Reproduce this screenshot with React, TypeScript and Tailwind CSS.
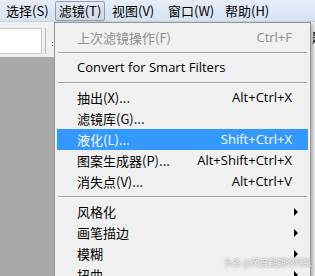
import React from "react";

const CJK = "font-['Microsoft_YaHei','Noto_Sans_CJK_SC',sans-serif]";

type Item =
  | { sep: true }
  | { label: string; key?: string; disabled?: boolean; active?: boolean; sub?: boolean; latin?: boolean };

const ITEMS: Item[] = [
  { label: "上次滤镜操作(F)", key: "Ctrl+F", disabled: true },
  { sep: true },
  { label: "Convert for Smart Filters", latin: true },
  { sep: true },
  { label: "抽出(X)...", key: "Alt+Ctrl+X" },
  { label: "滤镜库(G)...", key: "" },
  { label: "液化(L)...", key: "Shift+Ctrl+X", active: true },
  { label: "图案生成器(P)...", key: "Alt+Shift+Ctrl+X" },
  { label: "消失点(V)...", key: "Alt+Ctrl+V" },
  { sep: true },
  { label: "风格化", sub: true },
  { label: "画笔描边", sub: true },
  { label: "模糊", sub: true },
  { label: "扭曲", sub: true },
];

function Arrow() {
  return (
    <svg width="5" height="8" viewBox="0 0 5 8" className="shrink-0">
      <path d="M0 0 L4 4 L0 8 Z" fill="#000" />
    </svg>
  );
}

export default function App() {
  return (
    <div className={`relative w-[315px] h-[276px] overflow-hidden bg-[#a9a9a9] text-[13px] text-black ${CJK}`}>
      {/* menu bar */}
      <div className="h-[22px] flex items-center bg-gradient-to-b from-[#e6edf7] to-[#d6e1f1] border-b border-[#c5d2e4] whitespace-nowrap">
        <div className="w-[55px] pl-[6px] leading-none">选择(S)</div>
        <div className="w-[50px] h-[20px] flex items-center justify-center leading-none border border-[#8e9cb0] rounded-[2px] bg-gradient-to-b from-[#e4e9f1] to-[#d0d8e4]">
          滤镜(T)
        </div>
        <div className="ml-[7px] w-[56px] leading-none">视图(V)</div>
        <div className="w-[57px] leading-none">窗口(W)</div>
        <div className="leading-none">帮助(H)</div>
      </div>

      {/* toolbar strip */}
      <div className="h-[35px] bg-[#f0f0f0] flex items-start pt-[6px]">
        <div className="w-[42px] h-[26px] bg-white border-y border-r border-[#c8c8c8]" />
        <div className="w-px h-[26px] bg-[#b8b8b8] ml-[3px]" />
        <div className="ml-[6px] mt-[14px] flex flex-col gap-[2px]">
          <div className="w-[1px] h-[1px] bg-[#555]" />
          <div className="w-[1px] h-[1px] bg-[#555]" />
        </div>
      </div>

      {/* right edge background */}
      <div className="absolute left-[310px] top-[22px] w-[5px] h-[254px] bg-[#ececec] border-l border-[#9a9a9a] overflow-hidden">
        <div className="absolute left-[1px] top-[8px] text-[13px] leading-none">題</div>
      </div>

      {/* dropdown */}
      <div className="absolute left-[54px] top-[22px] w-[257px] h-[270px] bg-[#f0f0f0] border border-[#979797] shadow-[2px_2px_3px_rgba(0,0,0,0.25)] pt-[4px] px-[2px]">
        {ITEMS.map((it, i) =>
          "sep" in it ? (
            <div key={i} className="h-[9px] flex items-center px-[1px]">
              <div className="w-full h-[2px] border-t border-[#a0a0a0] border-b border-b-white" />
            </div>
          ) : (
            <div
              key={i}
              className={`h-[21px] flex items-center pl-[20px] pr-[16px] ${
                it.active ? "bg-[#3399ff] text-white" : it.disabled ? "text-[#8d8d8d]" : ""
              }`}
            >
              <span
                className={`flex-1 whitespace-nowrap ${
                  it.latin ? "font-['Segoe_UI','Open_Sans',sans-serif] text-[13px]" : ""
                }`}
              >
                {it.label}
              </span>
              {it.key ? (
                <span className="font-['Segoe_UI','Open_Sans',sans-serif] text-[13px] whitespace-nowrap">{it.key}</span>
              ) : null}
              {it.sub ? (
                <span className="mr-[-7px]">
                  <Arrow />
                </span>
              ) : null}
            </div>
          )
        )}
      </div>

      {/* watermark */}
      <div className="absolute left-[224px] top-[258px] text-[9px] tracking-[-0.4px] leading-none text-white/90 [text-shadow:0_0_2px_rgba(0,0,0,0.6)] whitespace-nowrap">
        头条 @风度翩翩的阿凯
      </div>
    </div>
  );
}
